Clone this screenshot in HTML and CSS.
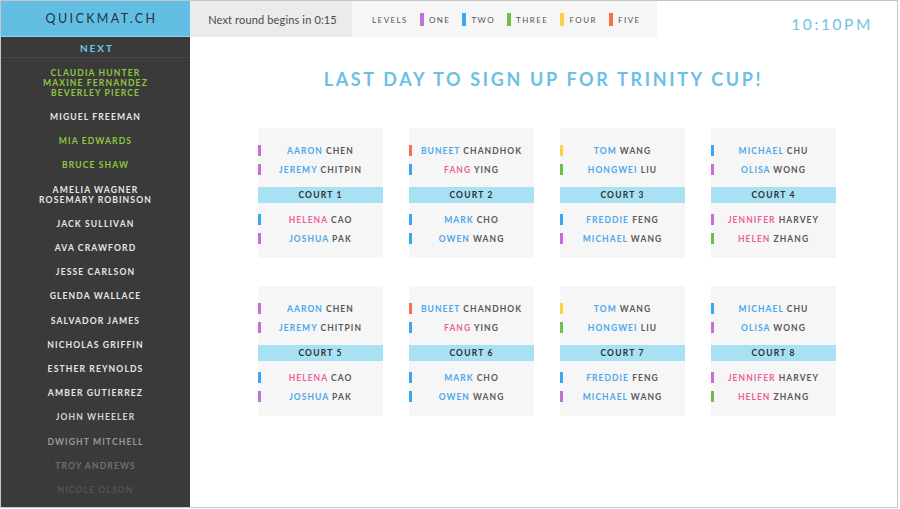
FILE: index.html
```html
<!DOCTYPE html>
<html lang="en">
<head>
<meta charset="utf-8">
<title>QuickMat</title>
<link rel="stylesheet" href="styles.css">
</head>
<body>
<div class="frame">
  <aside class="sidebar">
    <div class="brand">QUICKMAT.CH</div>
    <div class="next">NEXT</div>
    <ul class="queue">
      <li class="q-green">CLAUDIA HUNTER<br>MAXINE FERNANDEZ<br>BEVERLEY PIERCE</li>
      <li>MIGUEL FREEMAN</li>
      <li class="q-green">MIA EDWARDS</li>
      <li class="q-green">BRUCE SHAW</li>
      <li>AMELIA WAGNER<br>ROSEMARY ROBINSON</li>
      <li>JACK SULLIVAN</li>
      <li>AVA CRAWFORD</li>
      <li>JESSE CARLSON</li>
      <li>GLENDA WALLACE</li>
      <li>SALVADOR JAMES</li>
      <li>NICHOLAS GRIFFIN</li>
      <li>ESTHER REYNOLDS</li>
      <li>AMBER GUTIERREZ</li>
      <li class="q-fade1">JOHN WHEELER</li>
      <li class="q-fade2">DWIGHT MITCHELL</li>
      <li class="q-fade3">TROY ANDREWS</li>
      <li class="q-fade4">NICOLE OLSON</li>
    </ul>
  </aside>
  <main class="main">
    <header class="topbar">
      <div class="countdown">Next round begins in 0:15</div>
      <div class="legend">
        <span class="legend-title">LEVELS</span>
        <span class="lv"><i class="sw c-purple"></i>ONE</span>
        <span class="lv"><i class="sw c-blue"></i>TWO</span>
        <span class="lv"><i class="sw c-green"></i>THREE</span>
        <span class="lv"><i class="sw c-yellow"></i>FOUR</span>
        <span class="lv"><i class="sw c-orange"></i>FIVE</span>
      </div>
      <div class="clock">10:10PM</div>
    </header>
    <h1 class="headline">LAST DAY TO SIGN UP FOR TRINITY CUP!</h1>
    <section class="courts">
      <div class="card">
        <div class="row"><i class="bar c-purple"></i><span class="name"><b class="f-blue">AARON</b> CHEN</span></div>
        <div class="row"><i class="bar c-purple"></i><span class="name"><b class="f-blue">JEREMY</b> CHITPIN</span></div>
        <div class="court">COURT 1</div>
        <div class="row"><i class="bar c-blue"></i><span class="name"><b class="f-pink">HELENA</b> CAO</span></div>
        <div class="row"><i class="bar c-purple"></i><span class="name"><b class="f-blue">JOSHUA</b> PAK</span></div>
      </div>
      <div class="card">
        <div class="row"><i class="bar c-orange"></i><span class="name"><b class="f-blue">BUNEET</b> CHANDHOK</span></div>
        <div class="row"><i class="bar c-blue"></i><span class="name"><b class="f-pink">FANG</b> YING</span></div>
        <div class="court">COURT 2</div>
        <div class="row"><i class="bar c-blue"></i><span class="name"><b class="f-blue">MARK</b> CHO</span></div>
        <div class="row"><i class="bar c-blue"></i><span class="name"><b class="f-blue">OWEN</b> WANG</span></div>
      </div>
      <div class="card">
        <div class="row"><i class="bar c-yellow"></i><span class="name"><b class="f-blue">TOM</b> WANG</span></div>
        <div class="row"><i class="bar c-green"></i><span class="name"><b class="f-blue">HONGWEI</b> LIU</span></div>
        <div class="court">COURT 3</div>
        <div class="row"><i class="bar c-blue"></i><span class="name"><b class="f-blue">FREDDIE</b> FENG</span></div>
        <div class="row"><i class="bar c-purple"></i><span class="name"><b class="f-blue">MICHAEL</b> WANG</span></div>
      </div>
      <div class="card">
        <div class="row"><i class="bar c-blue"></i><span class="name"><b class="f-blue">MICHAEL</b> CHU</span></div>
        <div class="row"><i class="bar c-purple"></i><span class="name"><b class="f-blue">OLISA</b> WONG</span></div>
        <div class="court">COURT 4</div>
        <div class="row"><i class="bar c-purple"></i><span class="name"><b class="f-pink">JENNIFER</b> HARVEY</span></div>
        <div class="row"><i class="bar c-green"></i><span class="name"><b class="f-pink">HELEN</b> ZHANG</span></div>
      </div>
      <div class="card">
        <div class="row"><i class="bar c-purple"></i><span class="name"><b class="f-blue">AARON</b> CHEN</span></div>
        <div class="row"><i class="bar c-purple"></i><span class="name"><b class="f-blue">JEREMY</b> CHITPIN</span></div>
        <div class="court">COURT 5</div>
        <div class="row"><i class="bar c-blue"></i><span class="name"><b class="f-pink">HELENA</b> CAO</span></div>
        <div class="row"><i class="bar c-purple"></i><span class="name"><b class="f-blue">JOSHUA</b> PAK</span></div>
      </div>
      <div class="card">
        <div class="row"><i class="bar c-orange"></i><span class="name"><b class="f-blue">BUNEET</b> CHANDHOK</span></div>
        <div class="row"><i class="bar c-blue"></i><span class="name"><b class="f-pink">FANG</b> YING</span></div>
        <div class="court">COURT 6</div>
        <div class="row"><i class="bar c-blue"></i><span class="name"><b class="f-blue">MARK</b> CHO</span></div>
        <div class="row"><i class="bar c-blue"></i><span class="name"><b class="f-blue">OWEN</b> WANG</span></div>
      </div>
      <div class="card">
        <div class="row"><i class="bar c-yellow"></i><span class="name"><b class="f-blue">TOM</b> WANG</span></div>
        <div class="row"><i class="bar c-green"></i><span class="name"><b class="f-blue">HONGWEI</b> LIU</span></div>
        <div class="court">COURT 7</div>
        <div class="row"><i class="bar c-blue"></i><span class="name"><b class="f-blue">FREDDIE</b> FENG</span></div>
        <div class="row"><i class="bar c-purple"></i><span class="name"><b class="f-blue">MICHAEL</b> WANG</span></div>
      </div>
      <div class="card">
        <div class="row"><i class="bar c-blue"></i><span class="name"><b class="f-blue">MICHAEL</b> CHU</span></div>
        <div class="row"><i class="bar c-purple"></i><span class="name"><b class="f-blue">OLISA</b> WONG</span></div>
        <div class="court">COURT 8</div>
        <div class="row"><i class="bar c-purple"></i><span class="name"><b class="f-pink">JENNIFER</b> HARVEY</span></div>
        <div class="row"><i class="bar c-green"></i><span class="name"><b class="f-pink">HELEN</b> ZHANG</span></div>
      </div>
    </section>
  </main>
</div>
</body>
</html>
```

FILE: styles.css
```css
* { box-sizing: border-box; }
html, body { margin: 0; padding: 0; background: #fff; }
body { font-family: Lato, "Open Sans", "Liberation Sans", sans-serif; }

.frame {
  width: 898px;
  height: 508px;
  border: 1px solid #c6c6c6;
  display: flex;
  overflow: hidden;
}

/* Sidebar */
.sidebar {
  width: 189px;
  flex: 0 0 189px;
  background: #3a3a3a;
  display: flex;
  flex-direction: column;
}
.brand {
  height: 36px;
  background: #63bee4;
  border-bottom: 1px solid #8fd0ec;
  color: #27343f;
  font-size: 12.5px;
  letter-spacing: 2.4px;
  display: flex;
  align-items: center;
  justify-content: center;
  padding-left: 12px;
}
.next {
  height: 21px;
  border-bottom: 1px solid #474747;
  color: #6fc7ea;
  font-size: 10px;
  font-weight: 700;
  letter-spacing: 2px;
  display: flex;
  align-items: center;
  justify-content: center;
  padding-top: 2px;
  padding-left: 3px;
}
.queue {
  list-style: none;
  margin: 0;
  padding: 3px 0 0;
}
.queue li {
  padding: 7px 0;
  line-height: 10px;
  font-size: 8.6px;
  font-weight: 700;
  letter-spacing: 1.1px;
  color: #e6e6e6;
  text-align: center;
}
.queue li:nth-child(n+2) { padding: 7.1px 0; }
.queue li.q-green { color: #8dc640; }
.queue li.q-fade1 { color: #d4d4d4; }
.queue li.q-fade2 { color: #9a9a9a; }
.queue li.q-fade3 { color: #707070; }
.queue li.q-fade4 { color: #545454; }

/* Main */
.main {
  flex: 1;
  display: flex;
  flex-direction: column;
  min-width: 0;
}
.topbar {
  height: 36px;
  display: flex;
  align-items: stretch;
}
.countdown {
  width: 162px;
  background: #ebebeb;
  color: #4a4a4a;
  font-size: 11px;
  letter-spacing: 0.15px;
  display: flex;
  align-items: center;
  justify-content: center;
  padding-left: 3px;
}
.legend {
  width: 305px;
  background: #f6f6f6;
  display: flex;
  align-items: center;
  gap: 12px;
  padding: 1px 18px 0 20px;
  color: #555;
  font-size: 8px;
  letter-spacing: 1.45px;
}
.lv {
  display: flex;
  align-items: center;
  gap: 5px;
}
.sw {
  display: block;
  width: 4px;
  height: 13px;
}
.clock {
  margin-left: auto;
  padding: 14px 24px 0 0;
  color: #6ec3e6;
  font-size: 15.5px;
  letter-spacing: 2.6px;
}

.headline {
  margin: 31px 0 0;
  text-align: center;
  color: #6cc0e5;
  font-size: 18px;
  font-weight: 700;
  letter-spacing: 2.65px;
  line-height: 22px;
}

.courts {
  margin-top: 38px;
  display: grid;
  grid-template-columns: repeat(4, 125px);
  column-gap: 26px;
  row-gap: 28px;
  justify-content: center;
  padding-left: 7px;
}
.card {
  background: #f6f6f6;
  height: 130px;
  padding-top: 13px;
}
.row {
  height: 19px;
  display: grid;
  grid-template-columns: 3px 1fr 3px;
  align-items: center;
}
.bar {
  display: block;
  width: 3px;
  height: 11px;
}
.name {
  text-align: center;
  font-size: 8.5px;
  font-weight: 700;
  letter-spacing: 1.05px;
  color: #585858;
  white-space: nowrap;
}
.name b { font-weight: 700; }
.f-blue { color: #4aa8ec; }
.f-pink { color: #ec5f9e; }
.court {
  margin: 8px 0 7px;
  height: 16px;
  background: #a8e1f4;
  color: #2f2f2f;
  font-size: 8.5px;
  font-weight: 700;
  letter-spacing: 1.2px;
  display: flex;
  align-items: center;
  justify-content: center;
}

.c-purple { background: #c470da; }
.c-blue { background: #36a9f0; }
.c-green { background: #6dbf4c; }
.c-yellow { background: #fdd03f; }
.c-orange { background: #fa6c4a; }
```
